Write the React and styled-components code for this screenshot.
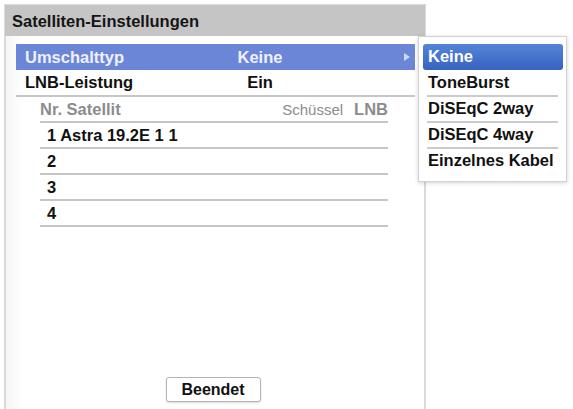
import React from 'react';
import styled, { createGlobalStyle } from 'styled-components';

const GlobalStyle = createGlobalStyle`
  html, body {
    margin: 0;
    padding: 0;
    background: #ffffff;
  }

  body {
    font-family: 'Liberation Sans', Arial, Helvetica, sans-serif;
    color: #111111;
  }
`;

const Page = styled.div`
  width: 573px;
  height: 409px;
  padding: 4px 0 0 4px;
  box-sizing: border-box;
  overflow: hidden;
`;

const Window = styled.div`
  position: relative;
  width: 422px;
  height: 410px;
  box-sizing: border-box;
  border: 2px solid #d9d9d9;
  border-bottom: none;
  display: flex;
  flex-direction: column;
  background: linear-gradient(to right, #f6f6f6 0, #ffffff 18px);
`;

const TitleBar = styled.div`
  height: 31px;
  line-height: 33px;
  padding-left: 7px;
  margin: -1px -1px 0 -1px;
  background: #c5c5c5;
  font-size: 16.5px;
  font-weight: 700;
  color: #151515;
`;

const Body = styled.div`
  flex: 1;
  display: flex;
  flex-direction: column;
  padding: 8px 9px 0 10px;
`;

const SettingRow = styled.div`
  display: flex;
  align-items: center;
  height: ${({ $divided }) => ($divided ? '25px' : '26px')};
  padding: 0 5px 0 9px;
  font-size: 16.5px;
  font-weight: 700;
  color: ${({ $selected }) => ($selected ? '#eef1ff' : '#111111')};
  background: ${({ $selected }) => ($selected ? '#6c86d7' : 'transparent')};
  border-bottom: ${({ $divided }) => ($divided ? '2px solid #c6c6c6' : 'none')};
`;

const SettingLabel = styled.span`
  flex: 0 0 175px;
`;

const SettingValue = styled.span`
  flex: 0 0 120px;
  text-align: center;
`;

const Arrow = styled.span`
  margin-left: auto;
  width: 0;
  height: 0;
  border-top: 4px solid transparent;
  border-bottom: 4px solid transparent;
  border-left: 6px solid #cdd7fb;
`;

const SatTable = styled.div`
  margin: 0 27px 0 24px;
`;

const SatHeader = styled.div`
  display: flex;
  align-items: center;
  height: 24px;
  border-bottom: 2px solid #c6c6c6;
  color: #8c8c8c;
  font-size: 16.5px;
  font-weight: 700;
`;

const HeaderCell = styled.span`
  margin-left: ${({ $push }) => ($push ? 'auto' : '0')};
  margin-right: ${({ $gap }) => ($gap ? '11px' : '0')};
  font-weight: ${({ $light }) => ($light ? 400 : 700)};
  font-size: ${({ $light }) => ($light ? '15px' : '16.5px')};
`;

const SatRow = styled.div`
  height: 24px;
  line-height: 24px;
  padding-left: 7px;
  border-bottom: 2px solid #c6c6c6;
  font-size: 16.5px;
  font-weight: 700;
`;

const Footer = styled.div`
  margin-top: auto;
  display: flex;
  justify-content: center;
  padding: 0 0 12px 0;
`;

const DoneButton = styled.button`
  width: 95px;
  height: 25px;
  padding: 0;
  margin-left: -5px;
  background: #ffffff;
  border: 1px solid #b4b4b4;
  border-radius: 3px;
  box-shadow: 0 1px 2px rgba(0, 0, 0, 0.15);
  font-family: inherit;
  font-size: 16px;
  font-weight: 700;
  color: #111111;
`;

const Menu = styled.div`
  position: absolute;
  top: 30px;
  left: 412px;
  width: 149px;
  box-sizing: border-box;
  padding: 7px 3px 7px 4px;
  background: #ffffff;
  border: 1px solid #d2d2d2;
  box-shadow: 0 1px 4px rgba(0, 0, 0, 0.18);
`;

const MenuItem = styled.div`
  position: relative;
  height: 26px;
  line-height: 25px;
  padding-left: 5px;
  font-size: 16.5px;
  font-weight: 700;
  border-radius: 3px;
  color: ${({ $selected }) => ($selected ? '#ffffff' : '#111111')};
  background: ${({ $selected }) =>
    $selected ? 'linear-gradient(#5585d8, #3563c0)' : 'transparent'};

  &::after {
    content: '';
    display: ${({ $divided }) => ($divided ? 'block' : 'none')};
    position: absolute;
    left: 4px;
    right: 5px;
    bottom: -1px;
    height: 2px;
    background: #cbcbcb;
  }
`;

const satellites = ['1 Astra 19.2E 1 1', '2', '3', '4'];

const options = ['Keine', 'ToneBurst', 'DiSEqC 2way', 'DiSEqC 4way', 'Einzelnes Kabel'];

export default function App() {
  return (
    <>
      <GlobalStyle />
      <Page>
        <Window>
          <TitleBar>Satelliten-Einstellungen</TitleBar>
          <Body>
            <SettingRow $selected>
              <SettingLabel>Umschalttyp</SettingLabel>
              <SettingValue>Keine</SettingValue>
              <Arrow />
            </SettingRow>
            <SettingRow $divided>
              <SettingLabel>LNB-Leistung</SettingLabel>
              <SettingValue>Ein</SettingValue>
            </SettingRow>
            <SatTable>
              <SatHeader>
                <HeaderCell>Nr. Satellit</HeaderCell>
                <HeaderCell $push $gap $light>
                  Schüssel
                </HeaderCell>
                <HeaderCell>LNB</HeaderCell>
              </SatHeader>
              {satellites.map(sat => (
                <SatRow key={sat}>{sat}</SatRow>
              ))}
            </SatTable>
            <Footer>
              <DoneButton>Beendet</DoneButton>
            </Footer>
          </Body>
          <Menu>
            {options.map((opt, i) => (
              <MenuItem key={opt} $selected={i === 0} $divided={i > 0 && i < 4}>
                {opt}
              </MenuItem>
            ))}
          </Menu>
        </Window>
      </Page>
    </>
  );
}
